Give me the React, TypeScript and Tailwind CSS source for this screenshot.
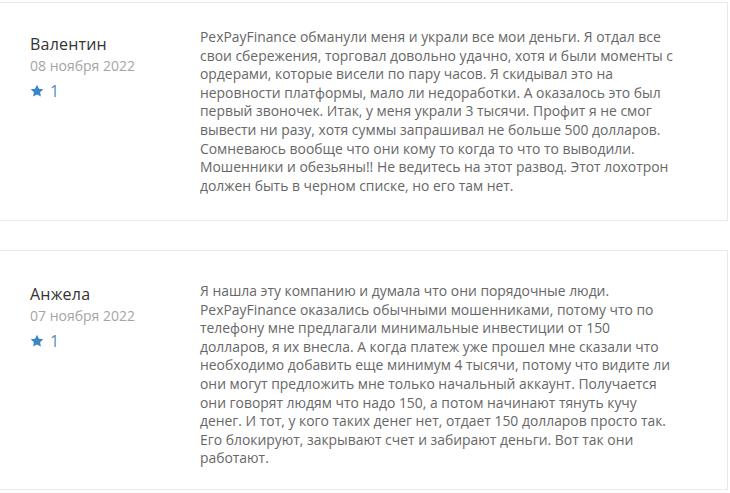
import React from "react";

const reviews = [
  {
    name: "Валентин",
    date: "08 ноября 2022",
    rating: 1,
    text: "PexPayFinance обманули меня и украли все мои деньги. Я отдал все свои сбережения, торговал довольно удачно, хотя и были моменты с ордерами, которые висели по пару часов. Я скидывал это на неровности платформы, мало ли недоработки. А оказалось это был первый звоночек. Итак, у меня украли 3 тысячи. Профит я не смог вывести ни разу, хотя суммы запрашивал не больше 500 долларов. Сомневаюсь вообще что они кому то когда то что то выводили. Мошенники и обезьяны!! Не ведитесь на этот развод. Этот лохотрон должен быть в черном списке, но его там нет.",
  },
  {
    name: "Анжела",
    date: "07 ноября 2022",
    rating: 1,
    text: "Я нашла эту компанию и думала что они порядочные люди. PexPayFinance оказались обычными мошенниками, потому что по телефону мне предлагали минимальные инвестиции от 150 долларов, я их внесла. А когда платеж уже прошел мне сказали что необходимо добавить еще минимум 4 тысячи, потому что видите ли они могут предложить мне только начальный аккаунт. Получается они говорят людям что надо 150, а потом начинают тянуть кучу денег. И тот, у кого таких денег нет, отдает 150 долларов просто так. Его блокируют, закрывают счет и забирают деньги. Вот так они работают.",
  },
];

function Star() {
  return (
    <svg width="14" height="14" viewBox="0 0 24 24" className="fill-[#3a87c8]">
      <path d="M12 1.2l3.3 6.8 7.5 1-5.5 5.2 1.4 7.4L12 18l-6.7 3.6 1.4-7.4-5.5-5.2 7.5-1z" />
    </svg>
  );
}

export default function App() {
  return (
    <div
      className="bg-white w-[730px] h-[493px] overflow-hidden pt-[2px]"
      style={{ fontFamily: '"Open Sans", "Noto Sans", sans-serif' }}
    >
      <div className="flex flex-col gap-[29px] -ml-px w-[729px]">
        {reviews.map((r, i) => (
          <div
            key={i}
            className={`flex border border-[#e9e9e9] pl-[30px] ${i === 0 ? "pt-[31px] h-[219px]" : "pt-[33px] h-[240px]"}`}
          >
            <div className="w-[170px] shrink-0">
              <div className="text-[16px] leading-[20px] text-[#333] tracking-[0.2px]">{r.name}</div>
              <div className="text-[14px] leading-[19px] text-[#a5a5a5] mt-[2px]">{r.date}</div>
              <div className="flex items-center gap-[6px] mt-[6px]">
                <Star />
                <span className="text-[16px] leading-[20px] text-[#5a8ab5]">{r.rating}</span>
              </div>
            </div>
            <div
              className={`w-[478px] text-[13.9px] leading-[18.6px] text-[#676767] ${i === 0 ? "mt-[-6px]" : "mt-[-2px]"}`}
            >
              {r.text}
            </div>
          </div>
        ))}
      </div>
    </div>
  );
}
